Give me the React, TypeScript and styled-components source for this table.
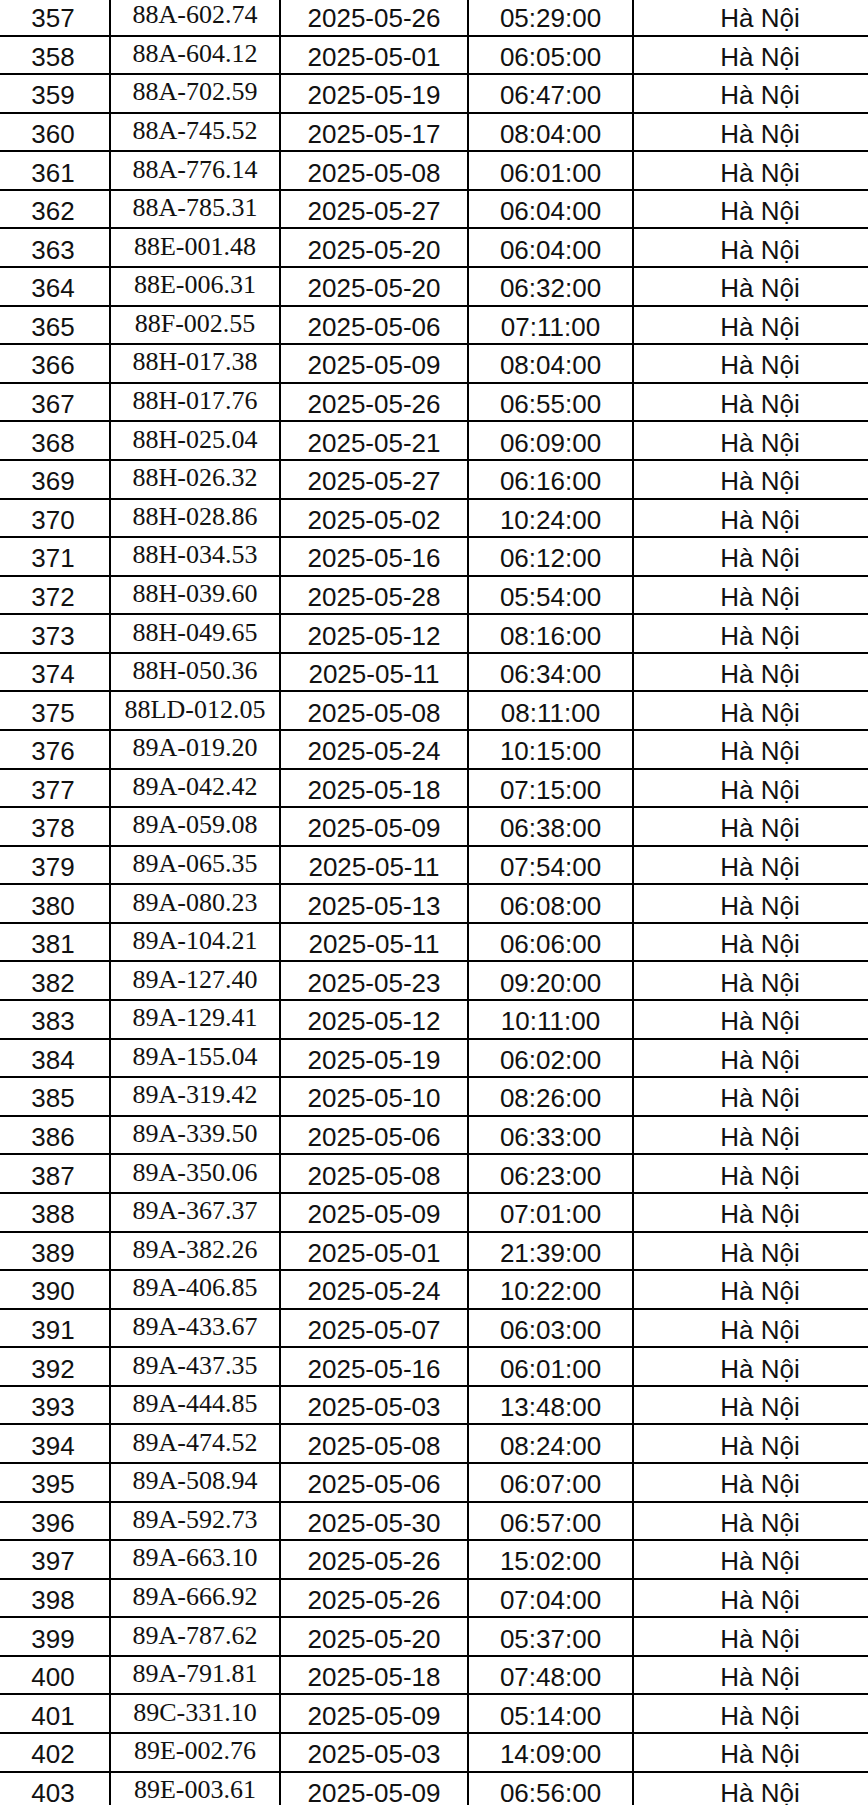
import React from 'react';
import styled, { createGlobalStyle } from 'styled-components';

const GlobalStyle = createGlobalStyle`
  html, body {
    margin: 0;
    padding: 0;
    background: #fff;
    overflow: hidden;
  }
`

const rows: [number, string, string, string][] = [
  [357, '88A-602.74', '2025-05-26', '05:29:00'],
  [358, '88A-604.12', '2025-05-01', '06:05:00'],
  [359, '88A-702.59', '2025-05-19', '06:47:00'],
  [360, '88A-745.52', '2025-05-17', '08:04:00'],
  [361, '88A-776.14', '2025-05-08', '06:01:00'],
  [362, '88A-785.31', '2025-05-27', '06:04:00'],
  [363, '88E-001.48', '2025-05-20', '06:04:00'],
  [364, '88E-006.31', '2025-05-20', '06:32:00'],
  [365, '88F-002.55', '2025-05-06', '07:11:00'],
  [366, '88H-017.38', '2025-05-09', '08:04:00'],
  [367, '88H-017.76', '2025-05-26', '06:55:00'],
  [368, '88H-025.04', '2025-05-21', '06:09:00'],
  [369, '88H-026.32', '2025-05-27', '06:16:00'],
  [370, '88H-028.86', '2025-05-02', '10:24:00'],
  [371, '88H-034.53', '2025-05-16', '06:12:00'],
  [372, '88H-039.60', '2025-05-28', '05:54:00'],
  [373, '88H-049.65', '2025-05-12', '08:16:00'],
  [374, '88H-050.36', '2025-05-11', '06:34:00'],
  [375, '88LD-012.05', '2025-05-08', '08:11:00'],
  [376, '89A-019.20', '2025-05-24', '10:15:00'],
  [377, '89A-042.42', '2025-05-18', '07:15:00'],
  [378, '89A-059.08', '2025-05-09', '06:38:00'],
  [379, '89A-065.35', '2025-05-11', '07:54:00'],
  [380, '89A-080.23', '2025-05-13', '06:08:00'],
  [381, '89A-104.21', '2025-05-11', '06:06:00'],
  [382, '89A-127.40', '2025-05-23', '09:20:00'],
  [383, '89A-129.41', '2025-05-12', '10:11:00'],
  [384, '89A-155.04', '2025-05-19', '06:02:00'],
  [385, '89A-319.42', '2025-05-10', '08:26:00'],
  [386, '89A-339.50', '2025-05-06', '06:33:00'],
  [387, '89A-350.06', '2025-05-08', '06:23:00'],
  [388, '89A-367.37', '2025-05-09', '07:01:00'],
  [389, '89A-382.26', '2025-05-01', '21:39:00'],
  [390, '89A-406.85', '2025-05-24', '10:22:00'],
  [391, '89A-433.67', '2025-05-07', '06:03:00'],
  [392, '89A-437.35', '2025-05-16', '06:01:00'],
  [393, '89A-444.85', '2025-05-03', '13:48:00'],
  [394, '89A-474.52', '2025-05-08', '08:24:00'],
  [395, '89A-508.94', '2025-05-06', '06:07:00'],
  [396, '89A-592.73', '2025-05-30', '06:57:00'],
  [397, '89A-663.10', '2025-05-26', '15:02:00'],
  [398, '89A-666.92', '2025-05-26', '07:04:00'],
  [399, '89A-787.62', '2025-05-20', '05:37:00'],
  [400, '89A-791.81', '2025-05-18', '07:48:00'],
  [401, '89C-331.10', '2025-05-09', '05:14:00'],
  [402, '89E-002.76', '2025-05-03', '14:09:00'],
  [403, '89E-003.61', '2025-05-09', '06:56:00'],
]

const colWidths = [114, 170, 188, 165, 254]

const Table = styled.table`
  border-collapse: collapse;
  table-layout: fixed;
  width: ${colWidths.reduce((a, b) => a + b, 0)}px;
  margin: -4px 0 0 -5px;
  color: #111;
`

const Row = styled.tr`
  height: 38.58px;
`

const Cell = styled.td<{ $serif?: boolean }>`
  border: 2px solid #000;
  padding: ${({ $serif }) => ($serif ? '0 0 2px' : '4px 0 0')};
  text-align: center;
  vertical-align: middle;
  white-space: nowrap;
  line-height: 1;
  font-size: 26px;
  font-family: ${({ $serif }) =>
    $serif ? '"Liberation Serif", "Times New Roman", serif' : '"Liberation Sans", Arial, sans-serif'};
`

export default function App() {
  return (
    <>
      <GlobalStyle />
      <Table>
        <colgroup>
          {colWidths.map((w, i) => (
            <col key={i} style={{ width: w }} />
          ))}
        </colgroup>
        <tbody>
          {rows.map(([no, plate, date, time]) => (
            <Row key={no}>
              <Cell>{no}</Cell>
              <Cell $serif>{plate}</Cell>
              <Cell>{date}</Cell>
              <Cell>{time}</Cell>
              <Cell>Hà Nội</Cell>
            </Row>
          ))}
        </tbody>
      </Table>
    </>
  )
}
